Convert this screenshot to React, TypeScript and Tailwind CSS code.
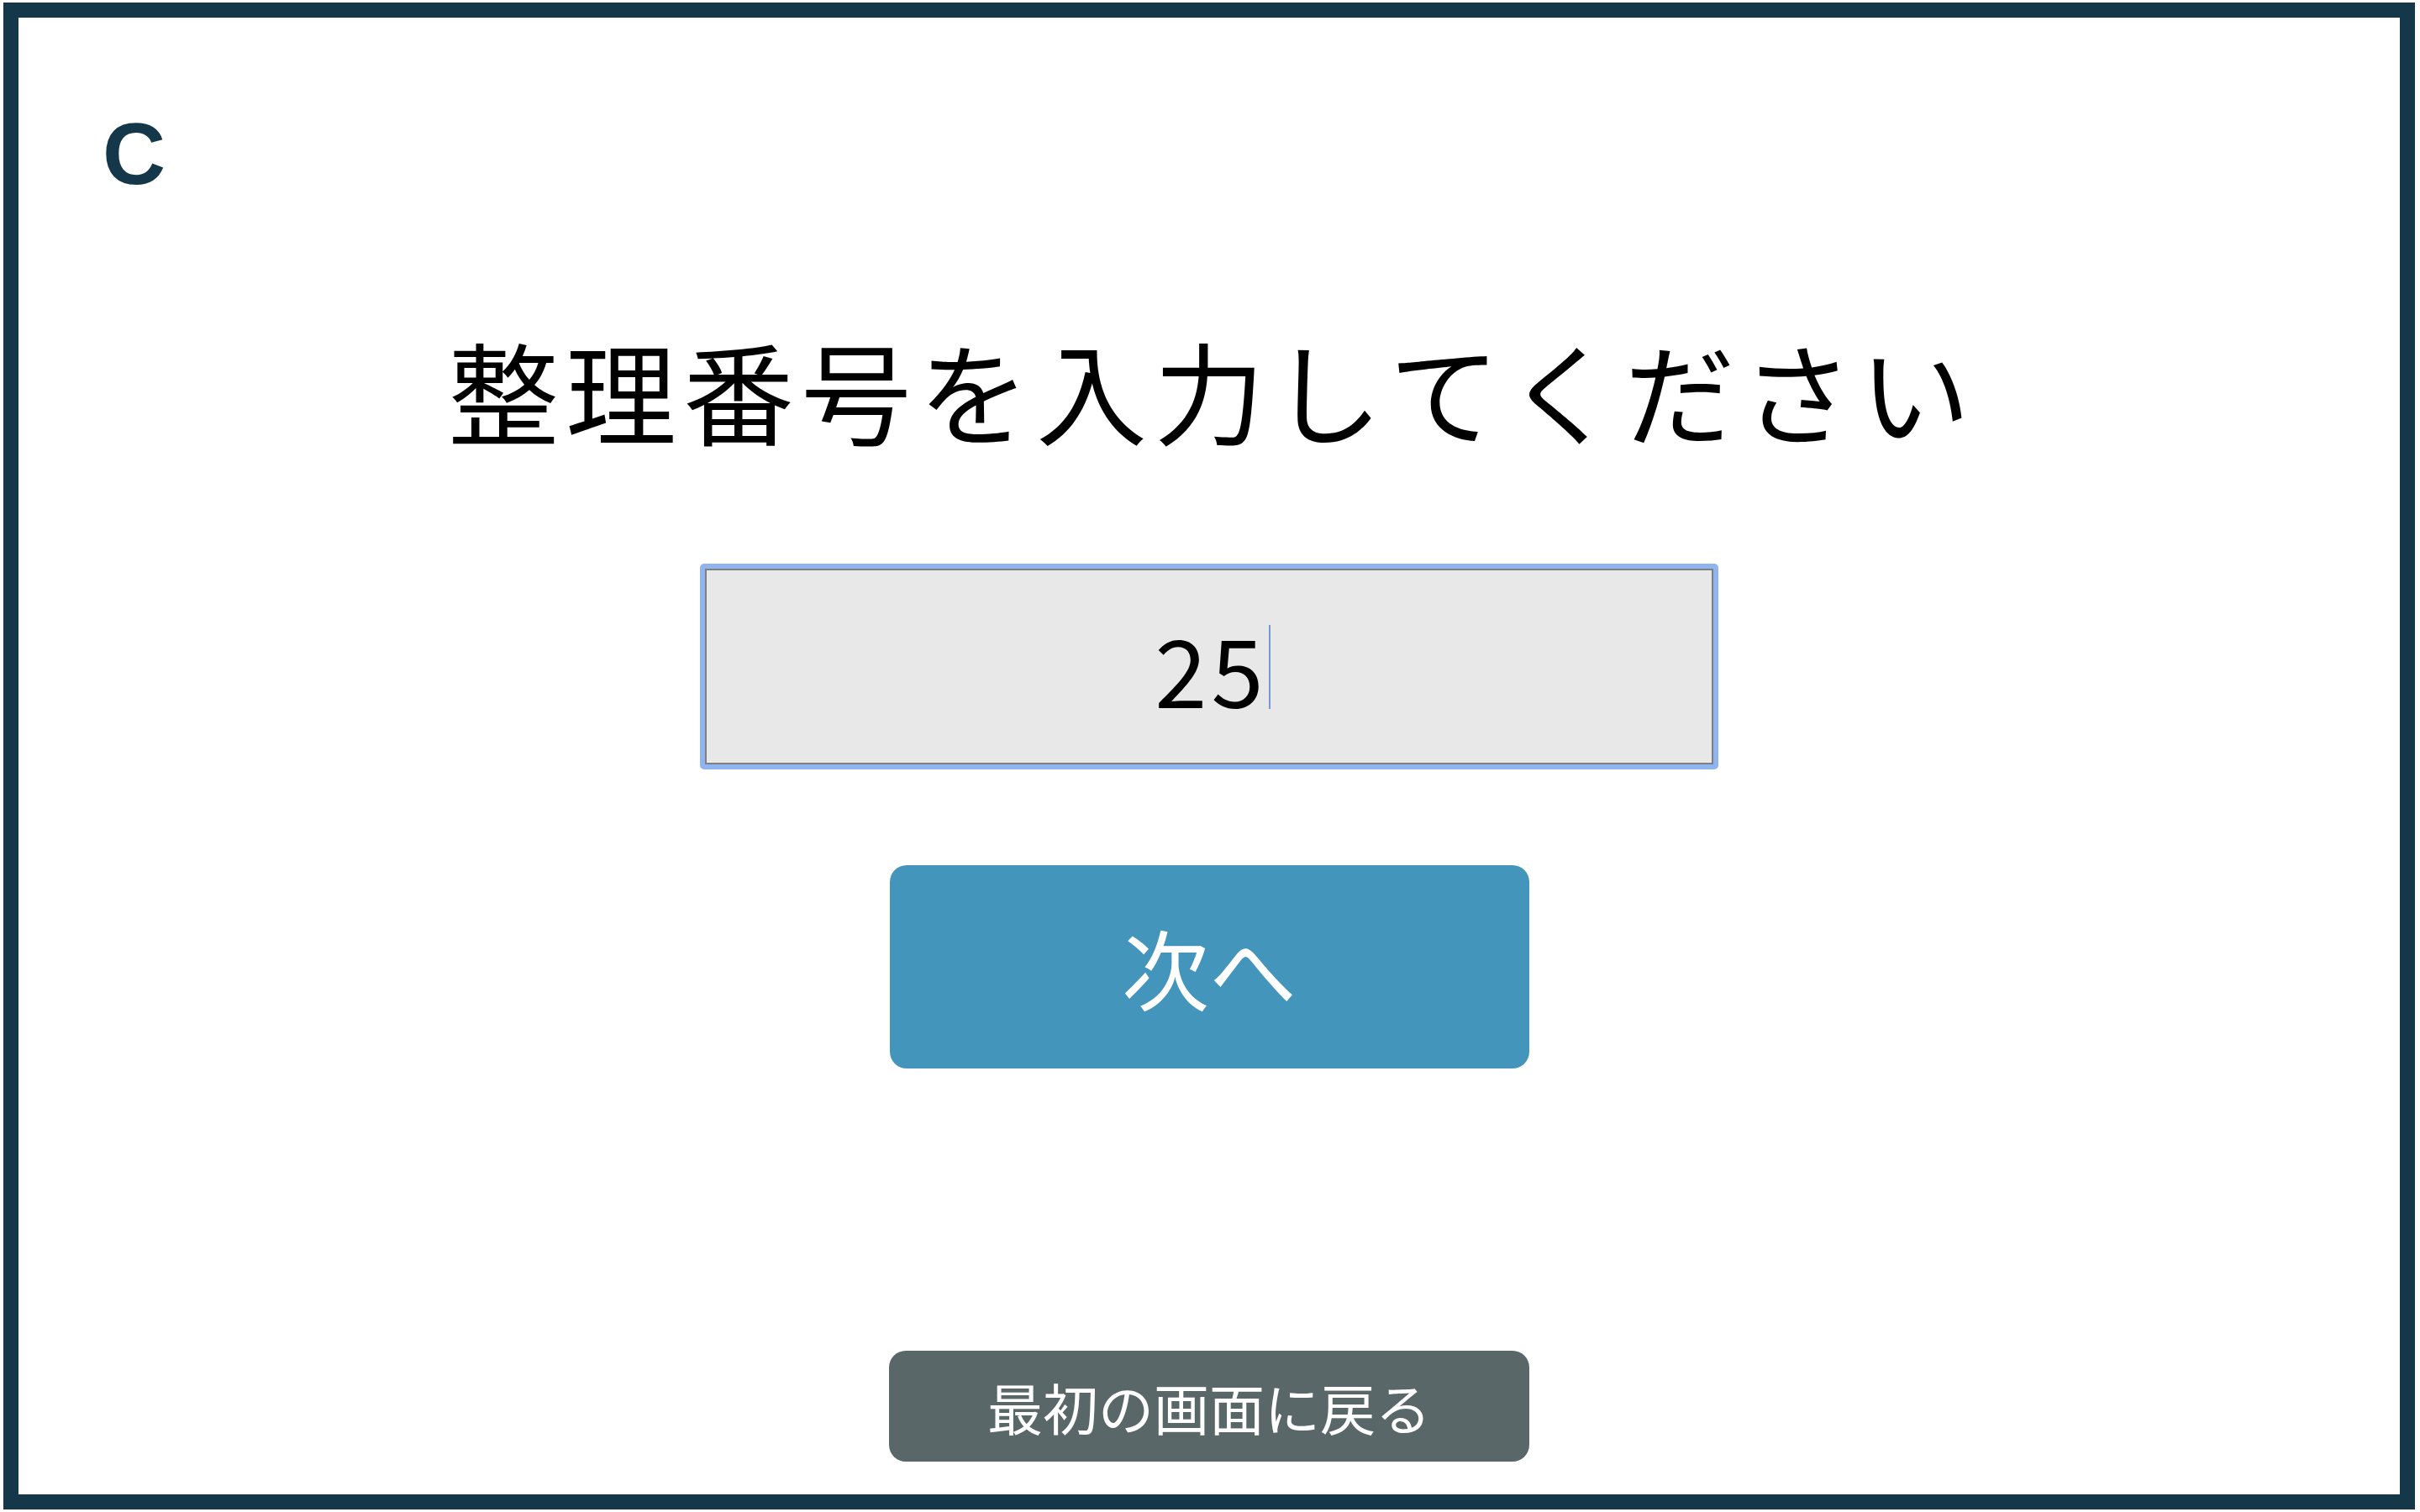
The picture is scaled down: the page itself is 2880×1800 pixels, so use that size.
import React from "react";

const jp = { fontFamily: '"Hiragino Sans", "Noto Sans CJK JP", sans-serif', fontKerning: "none" as const };

const App = () => {
  return (
    <div className="h-screen w-full bg-white pt-[3px] pb-[3px] pl-[4px] pr-[6px]">
      <div className="flex h-full flex-col border-[18px] border-[#15374a] bg-white">
        {/* logo */}
        <div className="pl-[100px] pt-[110px]">
          <span
            className="block text-[104px] font-bold leading-none text-[#15374a]"
            style={{ fontFamily: '"Liberation Sans", Arial, sans-serif' }}
          >
            C
          </span>
        </div>

        {/* title */}
        <h1
          className="mt-[162px] pl-[8px] text-center text-[132px] font-normal leading-none tracking-[8px] text-black"
          style={jp}
        >
          整理番号を入力してください
        </h1>

        {/* input */}
        <div className="mt-[142px] flex justify-center">
          <div className="rounded-[5px] bg-[#8fb4f0] p-[6px]">
            <div className="flex h-[233px] w-[1200px] items-center justify-center border-2 border-[#7f7f7f] bg-[#e8e8e8] pl-[5px]">
              <span className="relative text-[112px] leading-none tracking-[5px] text-black" style={jp}>
                25
                <span className="absolute left-full top-1/2 ml-[1px] h-[100px] w-[2px] -translate-y-1/2 bg-[#6f9ce0]" />
              </span>
            </div>
          </div>
        </div>

        {/* next */}
        <div className="mt-[114px] flex justify-center">
          <button
            className="flex h-[242px] w-[761px] items-center justify-center rounded-[20px] bg-[#4495bb] text-[104px] leading-none text-white"
            style={jp}
          >
            次へ
          </button>
        </div>

        {/* back */}
        <div className="mt-auto mb-[39px] flex justify-center">
          <button
            className="flex h-[132px] w-[762px] items-center justify-center rounded-[20px] bg-[#5a6769] text-[66px] leading-none text-white"
            style={jp}
          >
            最初の画面に戻る
          </button>
        </div>
      </div>
    </div>
  );
};

export default App;
